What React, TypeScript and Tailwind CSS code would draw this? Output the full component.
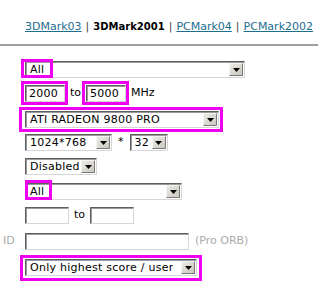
import React from "react";

type SelectProps = {
  value: string;
  width: number;
};

const Arrow = () => (
  <span className="flex h-[13px] w-[14px] shrink-0 items-center justify-center border border-t-[#f4f4f4] border-l-[#f4f4f4] border-b-[#7a7a7a] border-r-[#7a7a7a] bg-gradient-to-br from-[#ecebe6] to-[#c9c6bd]">
    <svg width="7" height="4" viewBox="0 0 7 4">
      <path d="M0 0h7L3.5 4z" fill="#000" />
    </svg>
  </span>
);

const Select = ({ value, width }: SelectProps) => (
  <div
    className="flex h-[17px] items-center justify-between border border-t-[#5e5e5e] border-l-[#5e5e5e] border-b-[#d6d6d6] border-r-[#d6d6d6] bg-white pr-[1px] pl-[4px] shadow-[inset_1px_1px_0_#9a9a9a]"
    style={{ width }}
  >
    <span className="truncate leading-none tracking-[0.25px]">{value}</span>
    <Arrow />
  </div>
);

const TextBox = ({ value, width }: { value?: string; width: number }) => (
  <div
    className="flex h-[17px] items-center border border-t-[#5e5e5e] border-l-[#5e5e5e] border-b-[#d6d6d6] border-r-[#d6d6d6] bg-white pl-[3px] leading-none tracking-[0.25px] shadow-[inset_1px_1px_0_#9a9a9a]"
    style={{ width }}
  >
    {value}
  </div>
);

const Mark = ({ className }: { className: string }) => (
  <span
    className={`pointer-events-none absolute border-[3px] border-[#f000f0] ${className}`}
  />
);

export default function App() {
  return (
    <div
      className="h-[300px] w-[328px] bg-white text-[11px] text-black"
      style={{ fontFamily: '"DejaVu Sans", Verdana, sans-serif' }}
    >
      <div className="flex h-[44px] items-start pt-[19px] pl-[25px] leading-[16px] text-[#444]">
        <a className="text-[#1d6d91] underline">3DMark03</a>
        <span className="mx-[4px]">|</span>
        <b className="text-[10px] text-black">3DMark2001</b>
        <span className="mx-[4px]">|</span>
        <a className="text-[#1d6d91] underline">PCMark04</a>
        <span className="mx-[4px]">|</span>
        <a className="text-[#1d6d91] underline">PCMark2002</a>
      </div>
      <hr className="w-[318px] border-t-2 border-[#a0a0a0]" />

      <div className="flex flex-col pt-[15px] pl-[25px]">
        <div className="relative w-fit">
          <Select value="All" width={220} />
          <Mark className="top-[-2px] left-[-4px] h-[19px] w-[32px]" />
        </div>

        <div className="mt-[7px] flex items-center gap-[5px]">
          <div className="relative">
            <TextBox value="2000" width={40} />
            <Mark className="-top-[4px] -left-[4px] -right-[3px] -bottom-[3px]" />
          </div>
          <span>to</span>
          <div className="relative">
            <TextBox value="5000" width={40} />
            <Mark className="-top-[4px] -left-[4px] -right-[3px] -bottom-[3px]" />
          </div>
          <span>MHz</span>
        </div>

        <div className="relative mt-[9px] w-fit">
          <Select value="ATI RADEON 9800 PRO" width={194} />
          <Mark className="-top-[4px] -left-[6px] -right-[4px] -bottom-[4px]" />
        </div>

        <div className="mt-[6px] flex items-center gap-[6px]">
          <Select value="1024*768" width={87} />
          <span>*</span>
          <Select value="32" width={38} />
        </div>

        <div className="mt-[7px]">
          <Select value="Disabled" width={72} />
        </div>

        <div className="relative mt-[8px] w-fit">
          <Select value="All" width={157} />
          <Mark className="top-[-3px] left-[0px] h-[20px] w-[27px]" />
        </div>

        <div className="mt-[7px] flex items-center gap-[5px]">
          <TextBox width={44} />
          <span>to</span>
          <TextBox width={44} />
        </div>

        <div className="relative mt-[9px] flex items-center gap-[6px]">
          <span className="absolute -left-[22px] text-[#aaa]">ID</span>
          <TextBox width={164} />
          <span className="text-[#aaa]">(Pro ORB)</span>
        </div>

        <div className="relative mt-[9px] w-fit">
          <Select value="Only highest score / user" width={172} />
          <Mark className="-top-[4px] -left-[5px] -right-[5px] -bottom-[5px]" />
        </div>
      </div>
    </div>
  );
}
